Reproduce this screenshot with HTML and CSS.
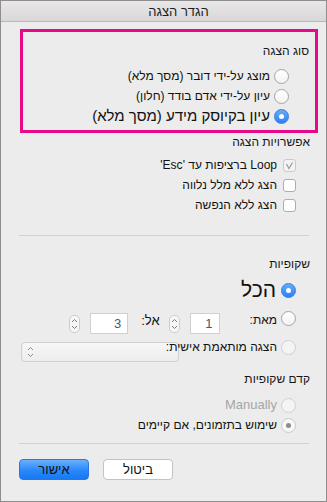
FILE: index.html
```html
<!DOCTYPE html>
<html lang="he" dir="rtl">
<head>
<meta charset="utf-8">
<link rel="stylesheet" href="styles.css">
</head>
<body>
<div class="window">
  <div class="titlebar"><span class="title">הגדר הצגה</span></div>
  <div class="content">
    <section class="highlight">
      <div class="heading">סוג הצגה</div>
      <div class="opts first">
        <div class="opt"><span class="radio"></span><span class="lbl">מוצג על-ידי דובר (מסך מלא)</span></div>
        <div class="opt"><span class="radio"></span><span class="lbl">עיון על-ידי אדם בודד (חלון)</span></div>
        <div class="opt"><span class="radio on"></span><span class="lbl big">עיון בקיוסק מידע (מסך מלא)</span></div>
      </div>
    </section>

    <section class="group">
      <div class="heading h-opts">אפשרויות הצגה</div>
      <div class="opts checks">
        <div class="opt"><span class="check dis"><svg width="11" height="11" viewBox="0 0 11 11"><polyline points="2.5,4 5,8.5 8.5,2.5" fill="none" stroke="#9a9a9a" stroke-width="1.2"/></svg></span><span class="lbl">Loop ברציפות עד 'Esc'</span></div>
        <div class="opt"><span class="check"></span><span class="lbl">הצג ללא מלל נלווה</span></div>
        <div class="opt"><span class="check"></span><span class="lbl">הצג ללא הנפשה</span></div>
      </div>
    </section>

    <hr class="sep sep1">

    <section class="group">
      <div class="heading h-slides">שקופיות</div>
      <div class="opt all"><span class="radio on"></span><span class="lbl huge">הכל</span></div>
      <div class="opt range">
        <span class="radio lift"></span>
        <span class="lbl from">מאת:</span>
        <span class="field">1</span>
        <span class="stepper"><svg width="9" height="16" viewBox="0 0 9 16"><polyline points="2,6 4.5,3.5 7,6" fill="none" stroke="#7a7a7a" stroke-width="1"/><polyline points="2,10 4.5,12.5 7,10" fill="none" stroke="#7a7a7a" stroke-width="1"/></svg></span>
        <span class="lbl to">אל:</span>
        <span class="field wide">3</span>
        <span class="stepper"><svg width="9" height="16" viewBox="0 0 9 16"><polyline points="2,6 4.5,3.5 7,6" fill="none" stroke="#7a7a7a" stroke-width="1"/><polyline points="2,10 4.5,12.5 7,10" fill="none" stroke="#7a7a7a" stroke-width="1"/></svg></span>
      </div>
      <div class="opt custom">
        <span class="radio dim"></span>
        <span class="lbl over">הצגה מותאמת אישית:</span>
        <span class="popup"><svg width="9" height="16" viewBox="0 0 9 16"><polyline points="2,6 4.5,3.5 7,6" fill="none" stroke="#8a8a8a" stroke-width="1"/><polyline points="2,10 4.5,12.5 7,10" fill="none" stroke="#8a8a8a" stroke-width="1"/></svg></span>
      </div>
    </section>

    <section class="group">
      <div class="heading h-adv">קדם שקופיות</div>
      <div class="opts adv">
        <div class="opt"><span class="radio dim"></span><span class="lbl muted">Manually</span></div>
        <div class="opt"><span class="radio grayon"></span><span class="lbl">שימוש בתזמונים, אם קיימים</span></div>
      </div>
    </section>

    <hr class="sep sep2">

    <div class="buttons">
      <button class="btn">ביטול</button>
      <button class="btn primary">אישור</button>
    </div>
  </div>
</div>
</body>
</html>
```

FILE: styles.css
```css
html, body {
  margin: 0;
  padding: 0;
  background: #ececec;
}

body {
  font-family: "Liberation Sans", "DejaVu Sans", sans-serif;
  font-size: 12px;
  color: #111;
}

.window {
  width: 327px;
  height: 502px;
  box-sizing: border-box;
  border: 1px solid #8e8e8e;
  background: #ececec;
  display: flex;
  flex-direction: column;
}

.titlebar {
  height: 20px;
  border-bottom: 1px solid #b9b9b9;
  background: linear-gradient(#e9e7e8, #d9d7d8);
  display: flex;
  justify-content: center;
  align-items: center;
  padding-left: 30px;
}

.title {
  font-size: 13px;
  color: #1e1e1e;
}

.content {
  display: flex;
  flex-direction: column;
}

.highlight {
  margin: 7px 8px 0 19px;
  border: 3px solid #e8088a;
  padding: 9px 6px 4px 0;
}

.heading {
  line-height: 20px;
  height: 20px;
  color: #161616;
}

.group .heading {
  padding-right: 16px;
  height: 18px;
  line-height: 18px;
}

.opts {
  display: flex;
  flex-direction: column;
}

.opts.first {
  margin-top: 5px;
  padding-right: 20px;
}

.opt {
  display: flex;
  align-items: center;
  height: 20px;
}

.group .opt {
  padding-right: 30px;
}

.group .opts .opt {
  padding-right: 0;
}

.opts.checks,
.opts.adv {
  padding-right: 30px;
}

.opts.checks {
  margin-top: 4px;
}

.lbl {
  white-space: nowrap;
  line-height: 20px;
}

.radio + .lbl {
  margin-right: 4px;
}

.lbl.big {
  font-size: 15px;
}

.lbl.huge {
  font-size: 21px;
}

.lbl.muted {
  color: #a6a6a6;
  font-size: 13px;
}

/* radio buttons */
.radio {
  flex: none;
  width: 15px;
  height: 15px;
  box-sizing: border-box;
  border-radius: 50%;
  border: 1px solid #a4a4a4;
  background: linear-gradient(#ffffff, #f3f3f3);
  display: grid;
  place-items: center;
}

.radio.on {
  border-color: #2f7fe6;
  background: linear-gradient(#66adf9, #2b80f4);
}

.radio.on::after {
  content: "";
  width: 5px;
  height: 5px;
  border-radius: 50%;
  background: #fff;
}

.radio.dim {
  border-color: #cfcfcf;
  background: #f4f4f4;
}

.radio.grayon {
  border-color: #c9c9c9;
  background: #f7f7f7;
}

.radio.grayon::after {
  content: "";
  width: 5px;
  height: 5px;
  border-radius: 50%;
  background: #8c8c8c;
}

/* checkboxes */
.check {
  flex: none;
  width: 13px;
  height: 13px;
  box-sizing: border-box;
  border: 1px solid #adadad;
  border-radius: 3px;
  background: #fff;
  margin-left: 6px;
  display: grid;
  place-items: center;
}

.check.dis {
  border-color: #c9c9c9;
  background: #f3f3f3;
}

/* slides */
.sep {
  border: 0;
  height: 1px;
  background: #d3d3d3;
  margin: 0 17px 0 18px;
}

.sep1 {
  margin-top: 20px;
}

.h-slides {
  margin-top: 19px;
}

.opt.all {
  height: 24px;
  margin-top: 5px;
}

.lbl.huge {
  line-height: 24px;
  margin-right: 5px;
}

.opt.range {
  height: 22px;
  margin-top: 10px;
}

.radio.lift {
  margin-bottom: 10px;
}

.lbl.from {
  margin-bottom: 7px;
  margin-left: 30px;
}

.field {
  flex: none;
  width: 30px;
  height: 21px;
  box-sizing: border-box;
  border: 1px solid #d0d0d0;
  background: #fff;
  color: #4b5670;
  font-size: 13px;
  line-height: 19px;
  padding-right: 6px;
  text-align: right;
}

.field.wide {
  width: 38px;
}

.stepper {
  flex: none;
  width: 11px;
  height: 18px;
  box-sizing: border-box;
  border: 1px solid #cdcdcd;
  border-radius: 5px;
  background: #f6f6f6;
  margin-right: 10px;
  margin-top: 2px;
  display: grid;
  place-items: center;
}

.stepper svg {
  display: block;
}

.lbl.to {
  margin-right: 9px;
  margin-left: 13px;
  margin-bottom: 4px;
  font-size: 13px;
}

.opt.custom {
  height: 25px;
  margin-top: 3px;
  align-items: flex-start;
}

.opt.custom .radio {
  margin-top: 3px;
}

.lbl.over {
  position: relative;
  z-index: 1;
  flex: none;
  width: 104px;
}

.popup {
  flex: none;
  width: 158px;
  height: 20px;
  box-sizing: border-box;
  margin-top: 5px;
  margin-right: -6px;
  border: 1px solid #cfcfcf;
  border-radius: 4px;
  background: linear-gradient(#f6f6f6, #ededed);
  display: flex;
  align-items: center;
  justify-content: flex-end;
  padding-left: 4px;
}

.h-adv {
  margin-top: 8px;
}

.opts.adv {
  margin-top: 7px;
}

.sep2 {
  margin-top: 8px;
}

.buttons {
  display: flex;
  justify-content: flex-end;
  gap: 14px;
  margin: 15px 0 0 18px;
}

.btn {
  width: 70px;
  height: 21px;
  box-sizing: border-box;
  font-family: inherit;
  font-size: 13px;
  color: #111;
  border: 1px solid #c3c3c3;
  border-radius: 4px;
  background: #fff;
  padding: 0;
  line-height: 19px;
}

.btn.primary {
  border-color: #2a76e6;
  background: linear-gradient(#6ab1fb, #2a88fa 55%, #1778f2);
}
```
